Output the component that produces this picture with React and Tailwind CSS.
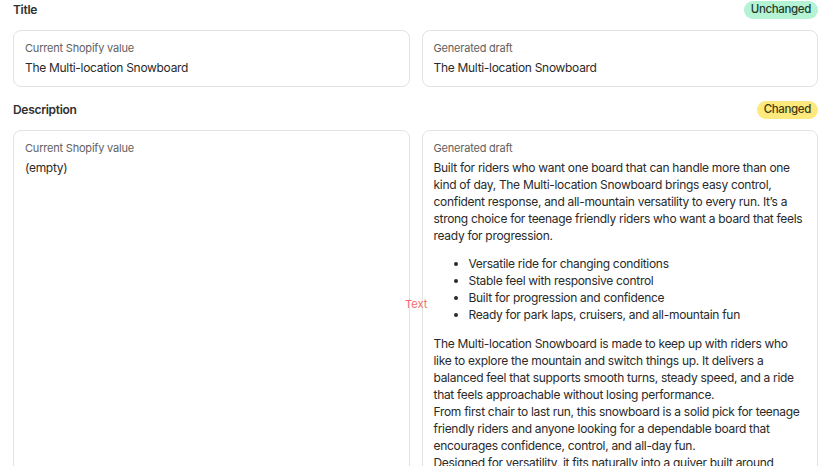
const FONT = { fontFamily: 'Inter, "Noto Sans", sans-serif' };

function Badge({ tone, children }) {
  const cls = tone === 'changed' ? 'bg-[#fde97c] text-[#3f3a12]' : 'bg-[#b4f3d4] text-[#1f3a2c]';
  return <span className={`inline-flex items-center h-[18px] rounded-full px-[7px] text-[11.5px] font-medium leading-none tracking-[-0.35px] ${cls}`}>{children}</span>;
}

function Panel({ label, children, className = '' }) {
  return (
    <div className={`rounded-lg border border-[#e3e3e3] bg-white px-[11px] pt-[10px] pb-3 ${className}`}>
      <div className="text-[11px] leading-[14px] tracking-[-0.2px] text-[#616161]">{label}</div>
      <div className="mt-[4px] text-[12px] leading-[17px] tracking-[-0.3px] text-[#2a2a2a]">{children}</div>
    </div>
  );
}

const BULLETS = [
  'Versatile ride for changing conditions',
  'Stable feel with responsive control',
  'Built for progression and confidence',
  'Ready for park laps, cruisers, and all-mountain fun',
];

export default function App() {
  return (
    <div className="bg-white w-[828px] h-[466px] overflow-hidden pl-[13px] pr-[10px] relative" style={FONT}>
      <div className="flex items-center justify-between h-[18px] mt-[1px]">
        <h2 className="text-[12px] font-semibold tracking-[-0.3px] text-[#303030]">Title</h2>
        <Badge>Unchanged</Badge>
      </div>
      <div className="grid grid-cols-2 gap-3 mt-[11px]">
        <Panel label="Current Shopify value" className="h-[57px]">The Multi-location Snowboard</Panel>
        <Panel label="Generated draft" className="h-[57px]">The Multi-location Snowboard</Panel>
      </div>

      <div className="flex items-center justify-between h-[18px] mt-[14px]">
        <h2 className="text-[12px] font-semibold tracking-[-0.3px] text-[#303030]">Description</h2>
        <Badge tone="changed">Changed</Badge>
      </div>
      <div className="grid grid-cols-2 gap-3 mt-[11px] items-stretch">
        <Panel label="Current Shopify value">(empty)</Panel>
        <Panel label="Generated draft">
          <p>
            Built for riders who want one board that can handle more than one kind of day, The Multi-location Snowboard
            brings easy control, confident response, and all-mountain versatility to every run. It’s a strong choice for
            teenage friendly riders who want a board that feels ready for progression.
          </p>
          <ul className="list-disc pl-[35px] mt-[11px]">
            {BULLETS.map((b) => <li key={b}>{b}</li>)}
          </ul>
          <p className="mt-[12px]">
            The Multi-location Snowboard is made to keep up with riders who like to explore the mountain and switch
            things up. It delivers a balanced feel that supports smooth turns, steady speed, and a ride that feels
            approachable without losing performance.
            <br />
            From first chair to last run, this snowboard is a solid pick for teenage friendly riders and anyone looking
            for a dependable board that encourages confidence, control, and all-day fun.
            <br />
            Designed for versatility, it fits naturally into a quiver built around everyday riding and new challenges.
          </p>
        </Panel>
      </div>

      <span className="absolute left-[405px] top-[297px] text-[11px] leading-[14px] text-[#f26b6b]">Text</span>
    </div>
  );
}
